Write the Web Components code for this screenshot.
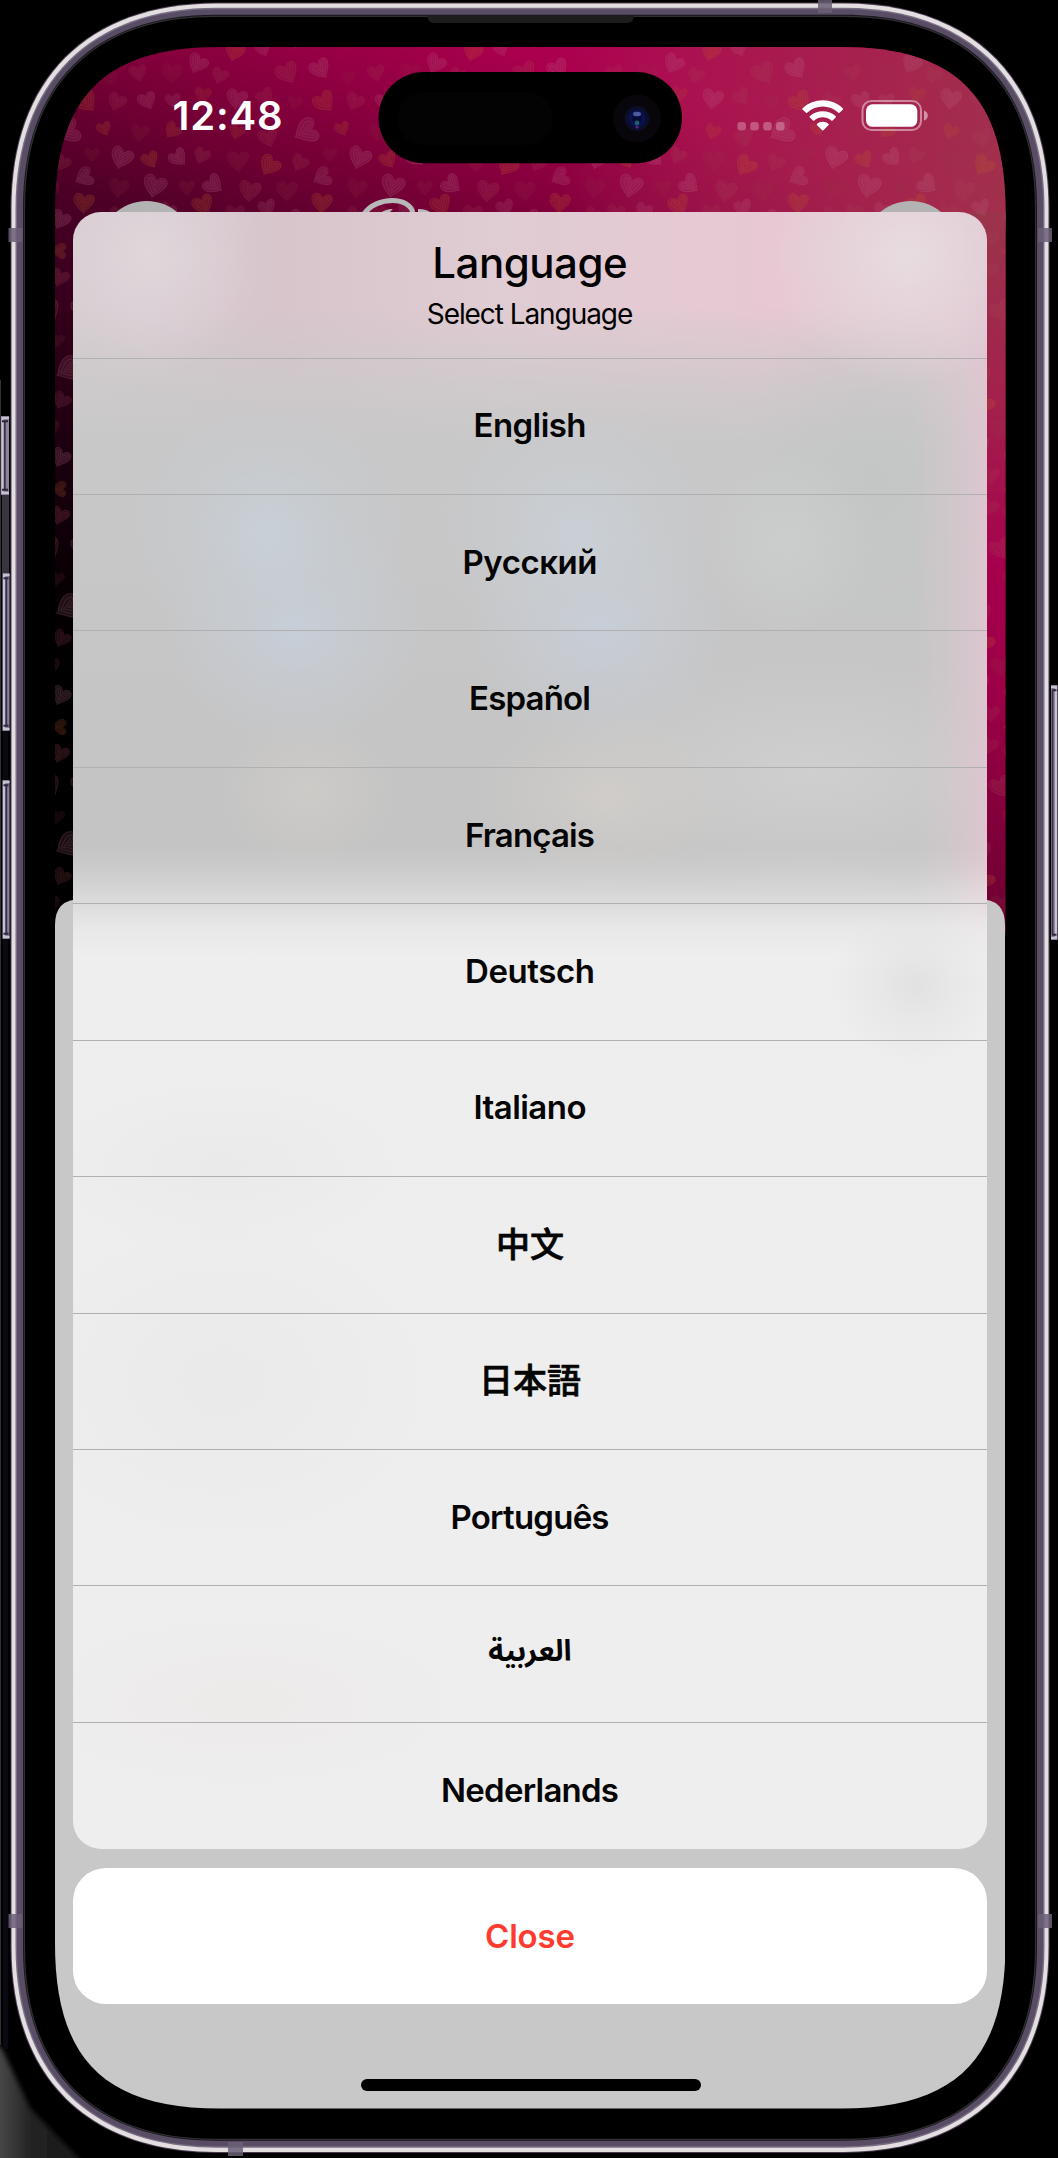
<!DOCTYPE html>
<html lang="en">
<head>
<meta charset="utf-8">
<title>Language</title>
<style>
html,body{margin:0;background:#000;width:1058px;height:2158px;overflow:hidden}
body{font-family:Inter,"Noto Sans CJK JP",sans-serif;color:#050505}
</style>
</head>
<body>
<phone-frame>
  <status-bar slot="status" time="12:48"></status-bar>
  <action-sheet heading="Language" note="Select Language">
    <sheet-option w="110">English</sheet-option>
    <sheet-option w="132">Русский</sheet-option>
    <sheet-option w="119">Español</sheet-option>
    <sheet-option w="127">Français</sheet-option>
    <sheet-option w="127">Deutsch</sheet-option>
    <sheet-option w="110">Italiano</sheet-option>
    <sheet-option cjk lang="zh">中文</sheet-option>
    <sheet-option cjk lang="ja">日本語</sheet-option>
    <sheet-option w="156">Português</sheet-option>
    <sheet-option arabic lang="ar">العربية</sheet-option>
    <sheet-option w="175">Nederlands</sheet-option>
    <close-button slot="close">Close</close-button>
  </action-sheet>
</phone-frame>
<script>
// Continuous-curvature rounded rectangle path
function squircle(x,y,w,h,r,k){
  const c=r*(1-k),X=x+w,Y=y+h;
  return `M${x+r} ${y}H${X-r}C${X-c} ${y} ${X} ${y+c} ${X} ${y+r}V${Y-r}C${X} ${Y-c} ${X-c} ${Y} ${X-r} ${Y}H${x+r}C${x+c} ${Y} ${x} ${Y-c} ${x} ${Y-r}V${y+r}C${x} ${y+c} ${x+c} ${y} ${x+r} ${y}Z`;
}
// Spread a text over a given ink width through letter-spacing
function fit(el,text,w,side){
  const n=[...text].length;
  const ls=(w+side-el.getBoundingClientRect().width)/(n-1);
  el.style.letterSpacing=ls.toFixed(3)+'px';
  el.style.marginRight=(-ls).toFixed(3)+'px';
}

class HeartWallpaper extends HTMLElement{
  connectedCallback(){
    const O='#c2602a',P='#c0708c',D='#a84858',V='#98384a';
    // x, y, size, rotation, colour, opacity within one 238px tile
    const hearts=[
     [105,4,22,20,O,.5],[133,1,18,-20,P,.4],[68,16,23,30,P,.42],[8,25,20,-10,D,.4],[42,25,24,5,V,.28],[90,28,19,20,D,.45],[157,25,26,-25,D,.5],[190,21,24,-30,P,.45],[218,30,18,0,V,.25],
     [73,47,19,10,O,.35],[17,53,21,-20,P,.42],[43,53,18,-10,P,.35],[107,51,24,10,P,.42],[135,49,20,-35,D,.42],[165,55,17,10,V,.3],[194,54,25,-35,O,.45],[225,54,21,25,D,.42],
     [43,83,19,40,O,.45],[107,84,18,20,O,.4],[10,85,20,10,V,.3],[138,90,22,-15,D,.45],[177,84,29,65,P,.42],[212,81,17,-20,O,.45],
     [20,112,20,-25,O,.5],[48,110,21,-40,P,.48],[72,108,19,25,D,.5],[108,113,25,0,V,.35],[140,118,24,35,O,.52],[170,115,20,30,D,.42],[200,107,17,0,V,.3],[230,110,26,20,P,.45],
     [25,138,27,15,P,.43],[57,140,18,0,V,.35],[83,137,23,-50,P,.48],[120,143,25,10,D,.48],[157,143,24,0,V,.35],[193,130,22,65,P,.43],[227,140,23,10,V,.3],
     [73,157,24,-25,O,.5],[192,155,24,5,O,.5],[137,160,20,-20,P,.4],[10,165,20,10,D,.4],[38,163,19,20,P,.4],[105,166,22,0,D,.4],[225,168,20,30,D,.4],
     [169,172,22,25,P,.45],[50,190,22,20,O,.4],[85,192,22,-15,D,.4],[120,188,20,40,P,.4],[147,190,20,0,D,.4],[205,192,23,-30,P,.4],
     [168,204,18,90,O,.5],[15,210,22,15,P,.4],[48,216,20,-30,D,.4],[80,222,24,10,P,.4],[116,218,19,0,O,.4],[145,222,21,20,D,.4],[194,220,24,-20,D,.4],[226,218,20,25,P,.4],[168,230,21,20,D,.5]];
    let u='';
    for(const [x,y,s,r,c,o] of hearts)
      for(const dx of [-238,0,238]) for(const dy of [-238,0,238]){
        const X=x+dx,Y=y+dy;
        if(X<-20||X>258||Y<-20||Y>258) continue;
        u+=`<use href="#h" transform="translate(${X} ${Y}) rotate(${r}) scale(${s/25})" fill="${c}" stroke="${c}" opacity="${o}"/>`;
      }
    this.attachShadow({mode:'open'}).innerHTML=`
<style>:host{display:block;width:1058px;height:2158px}svg{display:block}</style>
<svg width="1058" height="2158" viewBox="0 0 1058 2158">
<defs>
<linearGradient id="g" gradientUnits="userSpaceOnUse" x1="-221" y1="591" x2="57.4" y2="-153.4">
<stop offset="0" stop-color="#000"/><stop offset=".11" stop-color="#050003"/><stop offset=".37" stop-color="#260014"/><stop offset=".6" stop-color="#4c0026"/><stop offset=".735" stop-color="#720034"/><stop offset=".823" stop-color="#8a003f"/><stop offset=".956" stop-color="#a9004d"/><stop offset="1" stop-color="#ad0050"/></linearGradient>
<linearGradient id="w" gradientUnits="userSpaceOnUse" x1="560" y1="0" x2="1005" y2="0"><stop offset="0" stop-color="#aa3a55" stop-opacity="0"/><stop offset=".5" stop-color="#a4304e" stop-opacity=".55"/><stop offset="1" stop-color="#a0364c" stop-opacity=".88"/></linearGradient>
<linearGradient id="r" gradientUnits="userSpaceOnUse" x1="0" y1="212" x2="0" y2="900"><stop offset="0" stop-color="#9a344b"/><stop offset=".28" stop-color="#a3204c"/><stop offset=".52" stop-color="#a6004d"/><stop offset=".7" stop-color="#9c0046"/><stop offset="1" stop-color="#720034"/></linearGradient>
<filter id="s" x="0" y="0" width="1" height="1"><feGaussianBlur stdDeviation=".6"/></filter>
<g id="h"><path stroke="none" fill-opacity=".42" d="M0 11C-5 7-11 2-10-4C-9-10-2-9 0-3C3-10 10-9 11-4C11 1 5 5 0 11Z"/><path fill="none" stroke-width="1.1" stroke-opacity=".7" d="M1 11C-6 7-13 0-10-6C-7-11-1-8 0-3C4-11 12-8 10-2C9 4 3 7 0 12M0 8C-4 3-9-1-7-5C-4-8-2-3 0 1C2-4 7-8 8-4C7 1 3 4 0 8M-5-4C-3 0-1 3 0 5C2 1 5-2 6-4"/></g>
<pattern id="p" patternUnits="userSpaceOnUse" x="130" y="47" width="238" height="238">${u}</pattern>
</defs>
<rect width="1058" height="2158" fill="url(#g)"/>
<rect x="560" width="498" height="230" fill="url(#w)"/>
<rect x="940" y="212" width="80" height="720" fill="url(#r)"/>
<g opacity=".74" filter="url(#s)"><rect width="1058" height="940" fill="url(#p)"/></g>
<circle cx="146.7" cy="248" r="47" fill="#b3b3b3"/><circle cx="910.7" cy="248" r="47" fill="#b3b3b3"/>
<path d="M364 214C376 196 411 196 413 214" fill="none" stroke="#b8b8b8" stroke-width="5"/><path d="M379 214Q385 209 393 209L388 214ZM418 209Q428 209 432 214H418Z" fill="#b8b8b8"/>
<path d="M55 930V925Q55 899 81 899H979Q1005 899 1005 925V2110H55Z" fill="#c8c8c8"/>
</svg>`;
  }
}
customElements.define('heart-wallpaper',HeartWallpaper);

class PhoneFrame extends HTMLElement{
  connectedCallback(){
    const ant=(x,y,w,h)=>`<rect x="${x}" y="${y}" width="${w}" height="${h}" fill="#6b5f76" fill-opacity=".85"/>`;
    const btn=(x,y,w,h,left)=>`<rect x="${x}" y="${y}" width="${w}" height="${h}" fill="#8a819d"/><path d="${left?`M${x+w} ${y+2}H${x+1.5}V${y+h-2}H${x+w}`:`M${x} ${y+2}H${x+w-1.5}V${y+h-2}H${x}`}" fill="none" stroke="#c9c1cf" stroke-width="2.2"/><path d="M${left?x+3.8:x+1.5} ${y+6}V${y+h-6}" stroke="#3a3148" stroke-width="1.8"/><path d="M${x+1} ${y+5.2}H${x+w-1}M${x+1} ${y+h-5.2}H${x+w-1}" stroke="#2c2438" stroke-width="2"/>`;
    this.attachShadow({mode:'open'}).innerHTML=`
<style>
:host{display:block;width:1058px;height:2158px;position:relative;background:#000;overflow:hidden}
.case,.screen heart-wallpaper,.island{position:absolute;left:0;top:0}
.case{display:block}
.screen{position:absolute;inset:0;clip-path:path("${squircle(55,47,950.5,2061.5,165,.7)}")}
.content{position:relative;display:flex;flex-direction:column;padding:47px 71px 0 73px}
.home{align-self:center;width:340px;height:12.5px;border-radius:7px;background:#000;margin-top:75px;transform:translateX(1px)}
</style>
<svg class="case" width="1058" height="2158" viewBox="0 0 1058 2158">
<defs><linearGradient id="c" gradientUnits="userSpaceOnUse" x1="0" x2="80" y1="0" y2="0"><stop offset="0" stop-color="#464646"/><stop offset=".4" stop-color="#222"/><stop offset="1" stop-color="#1a1a1a"/></linearGradient><filter id="b"><feGaussianBlur stdDeviation="2.5"/></filter></defs>
<path d="M-10 2040L2 2049L30 2108L90 2170H-10Z" fill="url(#c)" filter="url(#b)"/>
<rect x="0" y="380" width="1" height="1665" fill="#333"/><rect x="2" y="494" width="7" height="79" fill="#3a3340"/><rect x="3" y="731" width="5" height="49" fill="#0a0912"/><rect x="3" y="939" width="5" height="1110" fill="#0b0a12"/>
${btn(1,416,8,79,1)}${btn(2.5,573,7,158,1)}${btn(2.5,780,7,159,1)}${btn(1051,685,6.5,255,0)}
<path d="${squircle(10.5,2.5,1039,2150.5,206,.63)}" fill="#4b3c52"/>
<path d="${squircle(11.5,3.5,1037,2148.5,205,.63)}" fill="#e3dfe0"/>
<path d="${squircle(15.5,7.7,1029,2140,201,.63)}" fill="#786d83"/>
<path d="${squircle(17,9.2,1026,2137,199,.63)}" fill="#584d64"/>
<path d="${squircle(23,14.7,1014,2126,193,.64)}" fill="#17151b"/>
<path d="${squircle(24.5,16.3,1011,2123,191,.64)}" fill="#000" stroke="#303033" stroke-width="1.2"/>
${ant(8.5,228,14,14)}${ant(1038,228,14,14)}${ant(8.5,1914,14,14)}${ant(1038,1914,14,14)}${ant(818,0,14,13)}${ant(228,2142,15,14)}
<path d="M427 16H634Q633 23 628 23H433Q429 23 427 16Z" fill="#1d1d1e"/>
</svg>
<div class="screen"><heart-wallpaper></heart-wallpaper></div>
<svg class="island" width="1058" height="180" viewBox="0 0 1058 180">
<rect x="378.5" y="72" width="303.5" height="91.3" rx="45.6"/><rect x="397" y="92" width="156" height="53" rx="26.5" fill="#030303"/>
<circle cx="637" cy="118.5" r="24" fill="#08060a"/><circle cx="637" cy="118.5" r="12.5" fill="#0b0e28"/><circle cx="637" cy="118.5" r="8.5" fill="#0b1052"/><circle cx="637" cy="119" r="5" fill="#090a34"/>
<ellipse cx="637" cy="114" rx="4" ry="2.3" fill="#4d5aa0"/><circle cx="637" cy="123" r="2.4" fill="#155f66"/><circle cx="637" cy="127" r="1.6" fill="#5a2480"/></svg>
<div class="content"><slot name="status"></slot><slot></slot><div class="home"></div></div>`;
  }
}

class StatusBar extends HTMLElement{
  connectedCallback(){
    this.attachShadow({mode:'open'}).innerHTML=`
<style>
:host{display:flex;justify-content:space-between;height:165px;box-sizing:border-box;padding:45px 57px 0 99.5px;color:#fff}
.t{font-weight:600;font-size:40px;line-height:48px;height:48px;white-space:nowrap}
svg{display:block;margin-top:6px}
</style>
<span class="t">${this.getAttribute('time')}</span>
<svg width="194" height="38" viewBox="736 98 194 38">
<g fill="#fff" fill-opacity=".28"><rect x="737.4" y="122" width="8.6" height="8.6" rx="3"/><rect x="750.2" y="122" width="8.6" height="8.6" rx="3"/><rect x="763.2" y="122" width="8.6" height="8.6" rx="3"/><rect x="776" y="122" width="8.6" height="8.6" rx="3"/></g>
<path fill="#fff" d="M802.5 108.5C813.5 97.6 832 97.6 843 108.5Q843.3 109 843 109.5L839.5 112.8Q839 113.2 838.4 112.8C829.5 104.4 816 104.4 807.1 112.8Q806.5 113.2 806 112.8L802.5 109.5Q802.2 109 802.5 108.5ZM809.7 116.3C816.7 109.6 828.8 109.6 835.8 116.3Q836.1 116.8 835.8 117.3L832.3 120.7Q831.7 121 831.2 120.6C826.4 116.2 819.1 116.2 814.3 120.6Q813.8 121 813.2 120.7L809.7 117.3Q809.4 116.8 809.7 116.3ZM816.9 124C820 121 825.5 121 828.6 124Q829 124.5 828.6 125L823.4 130.3Q822.8 130.8 822.2 130.3L816.9 125Q816.5 124.5 816.9 124Z"/>
<rect x="862.5" y="101" width="58.5" height="29" rx="9" fill="none" stroke="#fff" stroke-opacity=".45" stroke-width="2"/>
<rect x="866" y="104.3" width="51.3" height="22.5" rx="6.5" fill="#fff"/>
<path d="M924 110.5Q927.8 112 927.8 115.5Q927.8 119 924 120.5Z" fill="#fff" fill-opacity=".5"/>
</svg>`;
    fit(this.shadowRoot.querySelector('.t'),this.getAttribute('time'),107,3);
  }
}
customElements.define('status-bar',StatusBar);

class SheetOption extends HTMLElement{
  connectedCallback(){
    this.attachShadow({mode:'open'}).innerHTML=`
<style>
:host{display:flex;flex:none;height:136.45px;box-sizing:border-box;border-top:1px solid #b0b0b2;align-items:center;justify-content:center;font-size:33px;line-height:48px;font-weight:600;padding-bottom:2px}
:host([cjk]){font-family:"Noto Sans CJK JP",sans-serif;font-size:34px;font-weight:500;padding-bottom:4px;-webkit-text-stroke:.7px #050505}
:host([lang=zh]){font-family:"Noto Sans CJK SC",sans-serif}
:host([arabic]){font-family:"Noto Sans Arabic","DejaVu Sans",sans-serif;font-size:29.5px;font-weight:700;padding-bottom:5px}
span{white-space:nowrap}
</style><span><slot></slot></span>`;
    if(this.hasAttribute('w')) fit(this.shadowRoot.querySelector('span'),this.textContent,+this.getAttribute('w'),3);
  }
}

class CloseButton extends HTMLElement{
  connectedCallback(){
    this.attachShadow({mode:'open'}).innerHTML=`
<style>:host{display:flex;height:136px;border-radius:33px;background:#fff;color:#ff3b30;align-items:center;justify-content:center;font-size:33px;line-height:48px;margin-top:19px}
span{font-weight:600}</style><span><slot></slot></span>`;
    fit(this.shadowRoot.querySelector('span'),this.textContent,87,3);
  }
}

class ActionSheet extends HTMLElement{
  connectedCallback(){
    this.attachShadow({mode:'open'}).innerHTML=`
<style>
:host{display:flex;flex-direction:column}
.panel{display:flex;flex-direction:column;height:1636.7px;border-radius:28px;overflow:hidden;background:
 radial-gradient(ellipse 85px 80px at 842px 773px,rgba(222,222,222,.8),rgba(226,226,226,.5) 45%,rgba(232,232,232,0)),
 radial-gradient(ellipse 190px 90px at 150px 955px,rgba(230,230,230,.5),rgba(234,234,234,0)),
 radial-gradient(ellipse 220px 170px at 150px 1170px,rgba(230,230,230,.55),rgba(234,234,234,0)),
 radial-gradient(ellipse 230px 90px at 170px 1490px,rgba(236,230,229,.5),rgba(236,232,232,0)),
 linear-gradient(to bottom,rgba(238,238,238,0) 635px,rgba(238,238,238,.12) 652px,rgba(238,238,238,.48) 684px,rgba(238,238,238,.85) 715px,#eee 745px),
 radial-gradient(ellipse 110px 120px at 77px 43px,rgba(224,215,219,1),rgba(222,212,217,.6) 50%,rgba(218,206,212,0)),
 radial-gradient(ellipse 140px 130px at 834px 43px,rgba(231,220,224,1),rgba(230,215,221,.6) 50%,rgba(229,205,214,0)),
 linear-gradient(to right,rgba(220,200,208,0) 840px,rgba(222,200,208,.4) 880px,rgba(223,197,208,.9) 914px),
 radial-gradient(ellipse 140px 130px at 195px 320px,rgba(200,209,218,.85),rgba(200,205,210,.4) 55%,rgba(200,200,202,0)),
 radial-gradient(ellipse 130px 120px at 222px 415px,rgba(199,208,220,.85),rgba(199,205,213,.45) 55%,rgba(200,200,202,0)),
 radial-gradient(ellipse 140px 130px at 505px 320px,rgba(202,209,217,.85),rgba(202,206,210,.4) 55%,rgba(200,200,202,0)),
 radial-gradient(ellipse 130px 120px at 525px 415px,rgba(199,207,220,.85),rgba(200,205,213,.45) 55%,rgba(200,200,202,0)),
 radial-gradient(ellipse 90px 80px at 235px 580px,rgba(208,205,201,.75),rgba(202,200,198,0)),
 radial-gradient(ellipse 130px 90px at 530px 585px,rgba(210,206,202,.8),rgba(204,202,200,0)),
 radial-gradient(ellipse 260px 120px at 740px 560px,rgba(208,208,208,.9),rgba(203,203,203,0)),
 radial-gradient(ellipse 90px 90px at 715px 330px,rgba(204,206,205,.9),rgba(202,203,203,0)),
 radial-gradient(ellipse 130px 190px at 800px 270px,rgba(194,197,196,.65),rgba(196,198,197,0)),
 linear-gradient(to bottom,rgba(201,201,201,0) 95px,rgba(201,201,201,.7) 175px,#c8c8c9 235px,#c4c4c4 600px),
 linear-gradient(to right,#d6cdd1,#d8c5cc 210px,#e0ccd3 430px,#e7c8d3 700px,#e4cdd5)}
header{display:flex;flex-direction:column;align-items:center;flex:none;height:145.5px;box-sizing:border-box;padding-top:26px;color:#000}
h1{margin:0;font-size:42px;line-height:50px;font-weight:500}
p{margin:11px 0 0;font-size:28px;line-height:30px;font-weight:400}
h1,p{white-space:nowrap}
</style>
<div class="panel"><header><h1><span>${this.getAttribute('heading')}</span></h1><p><span>${this.getAttribute('note')}</span></p></header><slot></slot></div>
<slot name="close"></slot>`;
    fit(this.shadowRoot.querySelector('h1 span'),this.getAttribute('heading'),190.5,5);
    fit(this.shadowRoot.querySelector('p span'),this.getAttribute('note'),203.5,3);
  }
}
customElements.define('action-sheet',ActionSheet);
customElements.define('sheet-option',SheetOption);
customElements.define('close-button',CloseButton);
customElements.define('phone-frame',PhoneFrame);
</script>
</body>
</html>
